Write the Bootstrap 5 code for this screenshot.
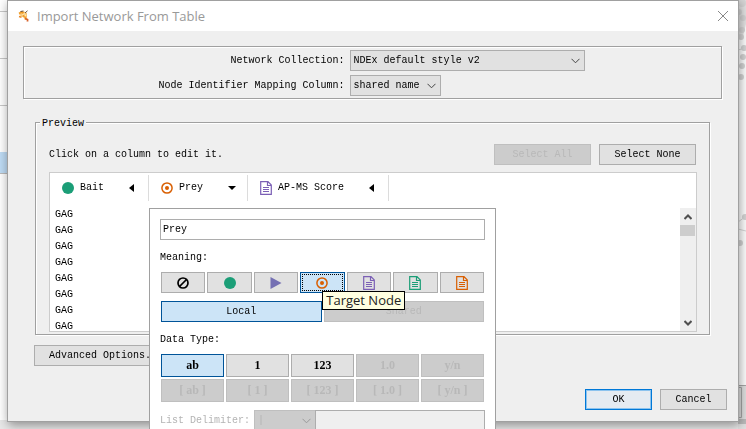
<!DOCTYPE html>
<html lang="en">
<head>
<meta charset="utf-8">
<meta name="viewport" content="width=device-width, initial-scale=1">
<title>Import Network From Table</title>
<link href="https://cdn.jsdelivr.net/npm/bootstrap@5.3.0/dist/css/bootstrap.min.css" rel="stylesheet">
<style>
html,body{height:100%}
body{background:#fff;color:#000;font:10px/16px "Liberation Mono",monospace;overflow:hidden}
.backdrop{inset:0;z-index:-1}
.backdrop svg{position:absolute;top:0}
.backdrop .floor{bottom:0;left:0;right:0;height:9px;background:#e8e8e8}
.win{background:#efefef;border:1px solid #a0a0a0;margin:0 7px;box-shadow:1px 3px 10px rgba(0,0,0,.4)}
.titlebar{height:30px;padding:0 9px 0 10px;background:#fff;color:#999;font:13px/30px "Open Sans",sans-serif}
.titlebar .logo{margin-right:7px}
.win-close{border:0;background:none;padding:0;line-height:0}
.win-body{padding:15px 16px 11px 15px}
.etched{border:1px solid #a0a0a0;box-shadow:1px 1px 0 #fff,inset 1px 1px 0 #fff}
.options{display:grid;grid-template-columns:46% auto;gap:4px 5px;padding:3px 0 2px;align-items:center;justify-items:start}
.options label{justify-self:end}
.win .form-select,.win .form-control{height:21px;min-height:0;border:1px solid #adadad;border-radius:0;font:inherit;color:#000;padding:0 3px;line-height:19px}
.win .form-control{padding:0 2px}
.win .form-select{background:#e1e1e1 url("data:image/svg+xml,%3Csvg xmlns='http://www.w3.org/2000/svg' width='9' height='6'%3E%3Cpath d='M.5.8 4.5 4.8 8.5 .8' fill='none' stroke='%23444'/%3E%3C/svg%3E") no-repeat right 4px center/9px 6px}
.win .pop .form-select:disabled{background-color:#ccc;background-image:url("data:image/svg+xml,%3Csvg xmlns='http://www.w3.org/2000/svg' width='9' height='6'%3E%3Cpath d='M.5.8 4.5 4.8 8.5 .8' fill='none' stroke='%23999'/%3E%3C/svg%3E");border-color:#bfbfbf;color:#b4b4b4;opacity:1}
.w-collection{width:235px}
.w-mapping{width:91px}
.preview{position:relative;margin:17px 12px 0;padding:0 13px 3px 14px;min-width:0}
.preview::before{content:"";position:absolute;inset:-10px 0 0;border:1px solid #a0a0a0;box-shadow:1px 1px 0 #fff,inset 1px 1px 0 #fff;pointer-events:none}
.preview legend{position:relative;z-index:1;float:none;width:auto;margin:0 0 0 -9px;padding:0 2px;background:#efefef;font:inherit;line-height:16px}
.b{height:21px;border:1px solid #adadad;border-radius:0;background:#e1e1e1;color:#000;font:inherit;line-height:17px;padding:0 4px}
.b:disabled{background:#ccc;border-color:#bfbfbf;color:#b8b8b8;opacity:1}
.b.on{background:#cce4f7;border-color:#005499}
.b.main{background:#e5ebf1;border-color:#0078d7;box-shadow:inset 0 0 0 1px #8cc3ee}
.b svg{display:block;margin:auto}
.w-wide{width:97px}
.w-std{width:67px}
.preview-actions{position:relative;padding:12px 1px 0 0}
.sheet{background:#fff;border:1px solid #ccc;margin-top:7px;position:relative}
.sheet-view{height:158px;overflow:hidden}
.sheet table{border-collapse:collapse;table-layout:fixed;width:339px;margin:0}
.sheet th{padding:2px 0 6px;font-weight:400}
.sheet td{padding:0 0 0 5px;height:16px;line-height:16px}
.head{height:26px;border-right:1px solid #dcdcdc;padding:0 9px 0 12px;gap:6px}
.head svg{display:block}
.head button{border:0;background:none;padding:0;width:10px}
.c1{width:99px}.c3{width:141px}
.scroller{width:16px;margin-top:35px;background:#efefef}
.scroller button{border:0;background:none;height:17px;padding:0;line-height:0;text-align:center}
.thumb{height:11px;background:#cdcdcd;margin-right:1px}
.pop{position:absolute;left:99px;top:35px;width:347px;padding:10px 10px 12px;background:#fff;border:1px solid #a0a0a0;z-index:2}
.pop-group{padding:0 1px;gap:2px}
.pop-label{margin:10px 0 6px}
.icons{display:grid;grid-template-columns:repeat(7,1fr)}
.icons .b{width:100%}
.types .b{height:23px;font:bold 12px/19px "Liberation Serif",serif}
.types{display:grid;grid-template-columns:repeat(5,1fr)}
.focus-dots{outline:1px dotted #000;outline-offset:-3px}
.tip{position:absolute;left:22px;top:19px;z-index:3;height:19px;padding:0 3px;border:1px solid #000;background:#ffffe1;color:#222;font:13px/17px "Open Sans",sans-serif;white-space:nowrap}
.delim{color:#b4b4b4}
.win .pop .delim .form-control{background:#efefef;width:auto;margin-left:-1px}
.w-delim{width:62px;flex:none}
.footer-actions{padding-top:23px;gap:8px;margin-right:-5px}
.advanced{margin:10px 0 0 11px;padding:0 14px}
.purple{color:#7b5fb5}.green{color:#1b9e77}.orange{color:#d95f02}
</style>
<script src="https://cdn.jsdelivr.net/npm/bootstrap@5.3.0/dist/js/bootstrap.bundle.min.js"></script>
</head>
<body>
<!-- Icons shared by the column heads and the editor -->
<svg width="0" height="0" class="position-absolute" aria-hidden="true">
  <symbol id="i-dot" viewBox="0 0 12 12"><circle cx="6" cy="6" r="6" fill="#1b9e77"/></symbol>
  <symbol id="i-target" viewBox="0 0 12 12"><circle cx="6" cy="6" r="5.1" fill="none" stroke="#d95f02" stroke-width="1.5"/><circle cx="6" cy="6" r="2" fill="#d95f02"/></symbol>
  <symbol id="i-doc" viewBox="0 0 12 14"><path d="M.7.7H8l3.300 3.300V13.300H.7zM7.500.7V4.500H11.300M3 6.500H9M3 8.500H9M3 10.500H9" fill="none" stroke="currentColor" stroke-width="1.200"/></symbol>
  <symbol id="i-none" viewBox="0 0 12 12"><circle cx="6" cy="6" r="5" fill="none" stroke="#000" stroke-width="1.700"/><path d="M2.500 9.500 9.500 2.500" stroke="#000" stroke-width="1.700"/></symbol>
  <symbol id="i-play" viewBox="0 0 12 12"><path d="M.5 0 11.500 6 .5 12z" fill="#7570b3"/></symbol>
</svg>

<div class="backdrop position-fixed" aria-hidden="true">
  <div class="floor position-absolute"></div>
  <svg width="7" height="429" style="left:0"><path d="M0 11.500H7M0 58.500H7M0 105.500H7" stroke="#c8c8c8"/><path d="M0 152h7v21H0z" fill="#bfdcf5"/><path d="M0 173.500H7" stroke="#bbb"/></svg>
  <svg width="8" height="429" style="right:0"><path d="M0 0H8V24L4 40 0 34z" fill="#e4e4e4"/><g fill="#d6d6d6"><circle cx="4" cy="3" r="4"/><circle cx="1" cy="12" r="3"/><circle cx="5" cy="18" r="3"/><circle cx="4" cy="30" r="3"/><circle cx="3" cy="37" r="3"/><circle cx="6" cy="48" r="3"/><circle cx="5" cy="57" r="3"/><circle cx="4" cy="66" r="3"/><circle cx="3" cy="77" r="3"/><circle cx="7" cy="217" r="3"/><circle cx="2" cy="243" r="3"/></g><path d="M0 50 7 48M0 222 7 217M0 229 8 231" stroke="#d8d8d8"/><path d="M0 385h8v44H0z" fill="#e1e1e1"/><path d="M0 385.500H8M0 387.500H3.500V417.500H0" fill="none" stroke="#a8a8a8"/><path d="M0 419h8v5H0z" fill="#bcbcbc"/></svg>
</div>

<main class="win">
  <header class="titlebar d-flex align-items-center">
    <svg class="logo" width="12" height="13" viewBox="0 0 12 13" aria-hidden="true"><path d="M1 4 3 1.500 6 1.200 7.500 2.500 9 3 9 10H7L5.500 7.500 3 6.500z" fill="#f9c878"/><path d="M1 3.500 3.500 2 6 3.500M5 5.500 8 7.500" fill="none" stroke="#f09a24" stroke-width="1.800"/><path d="M2.500 1.500 5.500 1M7 3 9.500.8" fill="none" stroke="#6b503c"/><path d="M4.500 4.500 6.500 3.500M7.200 4.500V6.500" stroke="#fff2cf"/><path d="M1 6.500 3.500 7.200" stroke="#e88628" stroke-width="1.500"/><path d="M7 8.500 9.500 9.500 9.500 11.500" fill="none" stroke="#d8622a" stroke-width="1.800"/></svg>
    <span class="me-auto">Import Network From Table</span>
    <button class="win-close" type="button" aria-label="Close"><svg width="12" height="12"><path d="M1 1 11 11M11 1 1 11" stroke="#888"/></svg></button>
  </header>
  <div class="win-body">
    <section class="etched options">
      <label for="collection">Network Collection:</label>
      <select id="collection" class="form-select w-collection"><option>NDEx default style v2</option></select>
      <label for="mapping">Node Identifier Mapping Column:</label>
      <select id="mapping" class="form-select w-mapping"><option>shared name</option></select>
    </section>

    <fieldset class="preview">
      <legend>Preview</legend>
      <div class="preview-actions d-flex align-items-center gap-2">
        <span class="me-auto">Click on a column to edit it.</span>
        <button class="b w-wide" type="button" disabled>Select All</button>
        <button class="b w-wide" type="button">Select None</button>
      </div>
      <div class="sheet">
        <div class="d-flex align-items-stretch">
          <div class="sheet-view flex-grow-1">
            <table>
              <colgroup><col class="c1"><col class="c1"><col class="c3"></colgroup>
              <thead><tr>
                <th scope="col"><div class="head d-flex align-items-center"><svg width="12" height="12"><use href="#i-dot"/></svg><span class="me-auto">Bait</span><button type="button" aria-label="Edit Bait"><svg width="5" height="8"><path d="M5 0V8L0 4z"/></svg></button></div></th>
                <th scope="col"><div class="head d-flex align-items-center"><svg width="12" height="12"><use href="#i-target"/></svg><span class="me-auto">Prey</span><button type="button" aria-label="Edit Prey" aria-expanded="true"><svg width="8" height="5"><path d="M0 0H8L4 4z"/></svg></button></div></th>
                <th scope="col"><div class="head d-flex align-items-center"><svg class="purple" width="12" height="14"><use href="#i-doc"/></svg><span class="me-auto">AP-MS Score</span><button type="button" aria-label="Edit AP-MS Score"><svg width="5" height="8"><path d="M5 0V8L0 4z"/></svg></button></div></th>
              </tr></thead>
              <tbody>
                <tr><td>GAG</td><td></td><td></td></tr>
                <tr><td>GAG</td><td></td><td></td></tr>
                <tr><td>GAG</td><td></td><td></td></tr>
                <tr><td>GAG</td><td></td><td></td></tr>
                <tr><td>GAG</td><td></td><td></td></tr>
                <tr><td>GAG</td><td></td><td></td></tr>
                <tr><td>GAG</td><td></td><td></td></tr>
                <tr><td>GAG</td><td></td><td></td></tr>
              </tbody>
            </table>
          </div>
          <div class="scroller d-flex flex-column">
            <button type="button" aria-label="Scroll up"><svg width="8" height="6"><path d="M.5 5 4 1.500 7.500 5" fill="none" stroke="#505050" stroke-width="2"/></svg></button>
            <div class="thumb"></div>
            <button class="mt-auto" type="button" aria-label="Scroll down"><svg width="8" height="6"><path d="M.5 1 4 4.500 7.500 1" fill="none" stroke="#505050" stroke-width="2"/></svg></button>
          </div>
        </div>

        <!-- Column editor -->
        <div class="pop">
          <input class="form-control" type="text" value="Prey" aria-label="Column name">
          <div class="pop-label">Meaning:</div>
          <div class="pop-group icons">
            <button class="b" type="button" aria-label="Not imported"><svg width="12" height="12"><use href="#i-none"/></svg></button>
            <button class="b" type="button" aria-label="Source node"><svg width="12" height="12"><use href="#i-dot"/></svg></button>
            <button class="b" type="button" aria-label="Interaction type"><svg width="12" height="12"><use href="#i-play"/></svg></button>
            <div class="position-relative d-flex">
              <button class="b on focus-dots" type="button" aria-label="Target node" aria-describedby="tip"><svg width="12" height="12"><use href="#i-target"/></svg></button>
              <div class="tip" id="tip" role="tooltip">Target Node</div>
            </div>
            <button class="b purple" type="button" aria-label="Edge attribute"><svg width="12" height="14"><use href="#i-doc"/></svg></button>
            <button class="b green" type="button" aria-label="Source node attribute"><svg width="12" height="14"><use href="#i-doc"/></svg></button>
            <button class="b orange" type="button" aria-label="Target node attribute"><svg width="12" height="14"><use href="#i-doc"/></svg></button>
          </div>
          <div class="pop-group d-flex mt-2">
            <button class="b on w-100" type="button">Local</button>
            <button class="b w-100" type="button" disabled>Shared</button>
          </div>
          <div class="pop-label">Data Type:</div>
          <div class="pop-group types">
            <button class="b on" type="button">ab</button>
            <button class="b" type="button">1</button>
            <button class="b" type="button">123</button>
            <button class="b" type="button" disabled>1.0</button>
            <button class="b" type="button" disabled>y/n</button>
            <button class="b" type="button" disabled>[ ab ]</button>
            <button class="b" type="button" disabled>[ 1 ]</button>
            <button class="b" type="button" disabled>[ 123 ]</button>
            <button class="b" type="button" disabled>[ 1.0 ]</button>
            <button class="b" type="button" disabled>[ y/n ]</button>
          </div>
          <div class="delim d-flex align-items-center mt-2">
            <label class="me-1" for="delimiter">List Delimiter:</label>
            <select id="delimiter" class="form-select w-delim" disabled><option>|</option></select>
            <input class="form-control flex-fill" type="text" disabled aria-label="Custom delimiter">
          </div>
        </div>
      </div>
    </fieldset>

    <button class="b advanced" type="button">Advanced Options...</button>
    <footer class="footer-actions d-flex justify-content-end">
      <button class="b main w-std" type="button">OK</button>
      <button class="b w-std" type="button">Cancel</button>
    </footer>
  </div>
</main>
</body>
</html>
